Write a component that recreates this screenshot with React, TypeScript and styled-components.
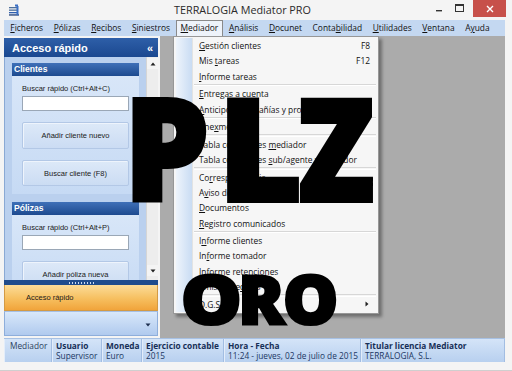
import React from "react";
import styled, { createGlobalStyle } from "styled-components";

const GlobalStyle = createGlobalStyle`
  html, body { margin: 0; padding: 0; }
  body { background: #f2f2f2; overflow: hidden; }
  * { box-sizing: border-box; }
`;

const UI = `"Open Sans", "Noto Sans", sans-serif`;
const TAHOMA = `"Liberation Sans", Arial, sans-serif`;

const Window = styled.div`
  position: relative;
  width: 512px;
  height: 371px;
  display: flex;
  flex-direction: column;
  background: #f4f4f4;
  padding: 0 7px 8px 4px;
  border-bottom: 1px solid #cfcfcf;
  font-family: ${UI};
  overflow: hidden;
`;

const TitleBar = styled.div`
  height: 20px;
  display: flex;
  align-items: flex-start;
  margin-right: -1px;
`;

const AppIcon = styled.svg`
  margin: 4px 0 0 4px;
  flex: none;
`;

const TitleText = styled.div`
  flex: 1;
  text-align: center;
  padding: 2px 0 0 32px;
  font-size: 10.8px;
  color: #2b2b2b;
  line-height: 16px;
`;

const Controls = styled.div`
  display: flex;
  align-items: flex-start;
`;

const CtrlBtn = styled.div<{ $w: number; $close?: boolean }>`
  width: ${(p) => p.$w}px;
  height: 17px;
  display: flex;
  align-items: center;
  justify-content: center;
  background: ${(p) => (p.$close ? "#c7504a" : "transparent")};
`;

const MenuBar = styled.div`
  height: 16px;
  display: flex;
  align-items: stretch;
  background: #c4d8f1;
  padding-left: 1px;
`;

const MenuItem = styled.div<{ $open?: boolean }>`
  padding: 0 ${(p) => (p.$open ? 3.3 : 5.3)}px;
  margin: 0 ${(p) => (p.$open ? 1 : 0)}px;
  font-size: 8.4px;
  line-height: ${(p) => (p.$open ? 14 : 16)}px;
  color: #111;
  background: ${(p) => (p.$open ? "#eef3fa" : "transparent")};
  border: ${(p) => (p.$open ? "1px solid #8a8a8a" : "none")};
  border-bottom: none;
  position: relative;
  z-index: 3;
`;

const Key = styled.span`
  text-decoration: underline;
  text-underline-offset: 1px;
  text-decoration-thickness: 1px;
`;

const Main = styled.div`
  flex: 1;
  display: flex;
  min-height: 0;
`;

const LeftPanel = styled.div`
  width: 154px;
  display: flex;
  flex-direction: column;
  padding-bottom: 2px;
`;

const PanelHeader = styled.div`
  height: 19px;
  margin-top: 2px;
  display: flex;
  align-items: center;
  justify-content: space-between;
  padding: 0 5px 0 8px;
  background: linear-gradient(#2e5fa8, #1b4890);
  color: #fff;
  font: bold 11px ${TAHOMA};
`;

const PanelBody = styled.div`
  height: 223px;
  display: flex;
  background: #bad0ee;
  border-left: 1px solid #8aa9d4;
  overflow: hidden;
`;

const PanelContent = styled.div`
  flex: 1;
  padding: 6px 7px 0 7px;
`;

const Section = styled.div`
  margin-bottom: 8px;
`;

const SectionHeader = styled.div`
  height: 13px;
  padding-left: 2px;
  background: linear-gradient(#3f70b8, #1d4a8f);
  color: #fff;
  font: bold 8.6px/13px ${TAHOMA};
`;

const SectionBody = styled.div`
  padding: 8px 10px 8px 10px;
  background: linear-gradient(#d8e6f8, #c6daf4);
  display: flex;
  flex-direction: column;
`;

const FieldLabel = styled.div`
  font: 7.5px/10px ${TAHOMA};
  color: #1a1a1a;
`;

const SearchInput = styled.div`
  margin-top: 2px;
  height: 15px;
  background: #fff;
  border: 1px solid #9aa7b6;
`;

const PanelButton = styled.div<{ $h: number }>`
  margin-top: 11px;
  height: ${(p) => p.$h}px;
  display: flex;
  align-items: center;
  justify-content: center;
  background: linear-gradient(#dde9f8, #cbdcf3);
  border: 1px solid #b3c8e6;
  border-radius: 2px;
  box-shadow: inset 1px 1px 0 #eef4fc;
  font: 7.5px ${TAHOMA};
  color: #1a1a1a;
  flex: none;
`;

const Scrollbar = styled.div`
  width: 12px;
  display: flex;
  flex-direction: column;
  justify-content: space-between;
  background: #ededed;
  border-left: 1px solid #d5d5d5;
  padding: 1px 0 4px;
`;

const ScrollArrow = styled.div`
  height: 11px;
  display: flex;
  align-items: center;
  justify-content: center;
  background: #f4f4f4;
`;

const Splitter = styled.div`
  height: 5px;
  display: flex;
  align-items: center;
  justify-content: center;
  background: #1f4c8d;
`;

const Grip = styled.div`
  width: 26px;
  height: 2px;
  background-image: radial-gradient(circle, #c9daf2 0.6px, transparent 0.8px);
  background-size: 3px 2px;
`;

const OrangeBar = styled.div`
  height: 26px;
  display: flex;
  align-items: center;
  padding-left: 21px;
  background: linear-gradient(#fcdc98, #f6bf5f 55%, #f1a43b);
  border: 1px solid #d39a44;
  border-top: none;
  font: 7.5px ${TAHOMA};
  color: #1a1a1a;
`;

const BlueBar = styled.div`
  height: 25px;
  display: flex;
  align-items: flex-end;
  justify-content: flex-end;
  padding: 0 6px 7px 0;
  background: linear-gradient(#d9e8fa, #b0caee);
  border: 1px solid #8eaedb;
  border-top: 1px solid #a6c0e5;
`;

const Mdi = styled.div`
  flex: 1;
  margin-left: 2px;
  background: #ababab;
`;

const StatusBar = styled.div`
  height: 24px;
  display: flex;
  background: linear-gradient(#d4e4f8, #b8d0ef);
  border-top: 1px solid #a7c1e4;
  position: relative;
`;

const Cell = styled.div<{ $w?: number; $pad?: number }>`
  ${(p) => (p.$w ? `width: ${p.$w}px; flex: none;` : "flex: 1;")}
  padding: 2px 0 0 ${(p) => p.$pad ?? 4}px;
  border-right: 1px solid #a2bde2;
  box-shadow: inset 1px 0 0 #e3edfa;
  font-size: 8.3px;
  line-height: 10px;
  color: #1b3662;
  white-space: nowrap;
  overflow: hidden;
`;

const CellTitle = styled.div<{ $bold?: boolean }>`
  font-weight: ${(p) => (p.$bold ? 700 : 400)};
  color: ${(p) => (p.$bold ? "#172f57" : "#2c3f5c")};
`;

const Dropdown = styled.div`
  position: absolute;
  left: 173px;
  top: 36px;
  width: 206px;
  padding: 1px 2px;
  background: #f6f6f6;
  border: 1px solid #979797;
  box-shadow: 3px 3px 3px rgba(0, 0, 0, 0.35);
  z-index: 2;
  display: flex;
  flex-direction: column;
  &::before {
    content: "";
    position: absolute;
    left: 2px;
    top: 1px;
    bottom: 1px;
    width: 16px;
    background: linear-gradient(90deg, #eef4fb, #c9dcf3);
    border-right: 1px solid #e2e3e3;
  }
`;

const DropItem = styled.div`
  position: relative;
  height: 15.3px;
  display: flex;
  align-items: center;
  justify-content: space-between;
  padding: 0 6px 0 23px;
  font-size: 8.4px;
  color: #111;
  white-space: nowrap;
`;

const DropSep = styled.div`
  position: relative;
  height: 2.3px;
  margin-left: 18px;
  border-top: 1px solid #d7d7d7;
  border-bottom: 1px solid #fff;
`;

const Stamp = styled.div<{ $size: number; $left: number; $top: number; $stroke: number }>`
  position: absolute;
  left: ${(p) => p.$left}px;
  top: ${(p) => p.$top}px;
  font-family: "Open Sans", "DejaVu Sans", sans-serif;
  font-weight: 800;
  font-size: ${(p) => p.$size}px;
  line-height: 1;
  color: #000;
  -webkit-text-stroke: ${(p) => p.$stroke}px #000;
  z-index: 5;
  white-space: nowrap;
  pointer-events: none;
`;

const StampLetter = styled.span<{ $after?: number; $sx?: number }>`
  display: inline-block;
  margin-right: ${(p) => p.$after ?? 0}px;
  transform: scaleX(${(p) => p.$sx ?? 1});
  transform-origin: left center;
`;

function Label({ text }: { text: string }) {
  const i = text.indexOf("&");
  if (i < 0) return <>{text}</>;
  return (
    <>
      {text.slice(0, i)}
      <Key>{text[i + 1]}</Key>
      {text.slice(i + 2)}
    </>
  );
}

const menus = [
  "&Ficheros",
  "&Pólizas",
  "&Recibos",
  "&Siniestros",
  "&Mediador",
  "&Análisis",
  "&Docunet",
  "Conta&bilidad",
  "&Utilidades",
  "&Ventana",
  "A&yuda",
];

type Entry = { label: string; shortcut?: string; sub?: boolean } | "sep";

const mediadorMenu: Entry[] = [
  { label: "&Gestión clientes", shortcut: "F8" },
  { label: "Mis &tareas", shortcut: "F12" },
  { label: "&Informe tareas" },
  "sep",
  { label: "&Entregas a cuenta" },
  { label: "&Anticipos compañías y productores" },
  "sep",
  { label: "Ane&xmed" },
  "sep",
  { label: "Tabla comisiones &mediador" },
  { label: "Tabla comisiones &sub/agente y cobrador" },
  "sep",
  { label: "Co&rrespondencia" },
  { label: "A&viso de vencimientos" },
  { label: "&Documentos" },
  { label: "&Registro comunicados" },
  "sep",
  { label: "I&nforme clientes" },
  { label: "In&forme tomador" },
  { label: "Inf&orme retenciones" },
  { label: "Emisión re&cibos" },
  "sep",
  { label: "D.G.S.F.&P.", sub: true },
];

const Arrow = ({ dir, color = "#222" }: { dir: "up" | "down" | "right"; color?: string }) => (
  <svg width="6" height="6" viewBox="0 0 6 6">
    {dir === "up" && <path d="M0.5 4.5 L3 1.5 L5.5 4.5 Z" fill={color} />}
    {dir === "down" && <path d="M0.5 1.5 L3 4.5 L5.5 1.5 Z" fill={color} />}
    {dir === "right" && <path d="M1.5 0.5 L4.5 3 L1.5 5.5 Z" fill={color} />}
  </svg>
);

function ClientesSection() {
  return (
    <Section>
      <SectionHeader>Clientes</SectionHeader>
      <SectionBody>
        <FieldLabel>Buscar rápido (Ctrl+Alt+C)</FieldLabel>
        <SearchInput />
        <PanelButton $h={27}>Añadir cliente nuevo</PanelButton>
        <PanelButton $h={26}>Buscar cliente (F8)</PanelButton>
      </SectionBody>
    </Section>
  );
}

function PolizasSection() {
  return (
    <Section>
      <SectionHeader>Pólizas</SectionHeader>
      <SectionBody>
        <FieldLabel>Buscar rápido (Ctrl+Alt+P)</FieldLabel>
        <SearchInput />
        <PanelButton $h={27}>Añadir póliza nueva</PanelButton>
      </SectionBody>
    </Section>
  );
}

export default function App() {
  return (
    <>
      <GlobalStyle />
      <Window>
        <TitleBar>
          <AppIcon width="12" height="12" viewBox="0 0 12 12">
            <rect x="7" y="0.5" width="3" height="2" fill="#3a6fc4" />
            <rect x="1" y="3" width="9" height="1.3" fill="#4d6f9c" />
            <rect x="1" y="5.5" width="9" height="1.3" fill="#4d6f9c" />
            <rect x="1" y="8" width="9" height="1.3" fill="#2f5fae" />
            <rect x="1" y="10.3" width="10" height="1.3" fill="#1f3f7a" />
            <rect x="8.5" y="2" width="2" height="9" fill="#3a6fc4" />
          </AppIcon>
          <TitleText>TERRALOGIA Mediator PRO</TitleText>
          <Controls>
            <CtrlBtn $w={12}>
              <svg width="6" height="8" viewBox="0 0 6 8">
                <rect x="0" y="5" width="6" height="1.4" fill="#333" />
              </svg>
            </CtrlBtn>
            <CtrlBtn $w={28}>
              <svg width="9" height="9" viewBox="0 0 9 9">
                <rect x="0.5" y="0.5" width="8" height="7" fill="none" stroke="#333" />
                <rect x="0.5" y="0.5" width="8" height="1.5" fill="#333" />
              </svg>
            </CtrlBtn>
            <CtrlBtn $w={33} $close>
              <svg width="8" height="8" viewBox="0 0 8 8">
                <path d="M1 1 L7 7 M7 1 L1 7" stroke="#fff" strokeWidth="1.4" />
              </svg>
            </CtrlBtn>
          </Controls>
        </TitleBar>

        <MenuBar>
          {menus.map((m) => (
            <MenuItem key={m} $open={m === "&Mediador"}>
              <Label text={m} />
            </MenuItem>
          ))}
        </MenuBar>

        <Main>
          <LeftPanel>
            <PanelHeader>
              <span>Acceso rápido</span>
              <span>«</span>
            </PanelHeader>
            <PanelBody>
              <PanelContent>
                <ClientesSection />
                <PolizasSection />
              </PanelContent>
              <Scrollbar>
                <ScrollArrow>
                  <Arrow dir="up" />
                </ScrollArrow>
                <ScrollArrow>
                  <Arrow dir="down" />
                </ScrollArrow>
              </Scrollbar>
            </PanelBody>
            <Splitter>
              <Grip />
            </Splitter>
            <OrangeBar>Acceso rápido</OrangeBar>
            <BlueBar>
              <Arrow dir="down" color="#1d2f4f" />
            </BlueBar>
          </LeftPanel>
          <Mdi />
        </Main>

        <StatusBar>
          <Cell $w={48} $pad={6}>
            <CellTitle>Mediador</CellTitle>
          </Cell>
          <Cell $w={50}>
            <CellTitle $bold>Usuario</CellTitle>
            <div>Supervisor</div>
          </Cell>
          <Cell $w={40}>
            <CellTitle $bold>Moneda</CellTitle>
            <div>Euro</div>
          </Cell>
          <Cell $w={82}>
            <CellTitle $bold>Ejercicio contable</CellTitle>
            <div>2015</div>
          </Cell>
          <Cell $w={137}>
            <CellTitle $bold>Hora - Fecha</CellTitle>
            <div>11:24 - jueves, 02 de julio de 2015</div>
          </Cell>
          <Cell>
            <CellTitle $bold>Titular licencia Mediator</CellTitle>
            <div>TERRALOGIA, S.L.</div>
          </Cell>
        </StatusBar>

        <Dropdown>
          {mediadorMenu.map((e, i) =>
            e === "sep" ? (
              <DropSep key={i} />
            ) : (
              <DropItem key={i}>
                <span>
                  <Label text={e.label} />
                </span>
                {e.shortcut && <span>{e.shortcut}</span>}
                {e.sub && <Arrow dir="right" />}
              </DropItem>
            )
          )}
        </Dropdown>

        <Stamp $size={142} $left={124} $top={75} $stroke={4}>
          <StampLetter $sx={0.95} $after={4}>P</StampLetter>
          <StampLetter $sx={1.02} $after={-2}>L</StampLetter>
          <StampLetter $sx={0.88}>Z</StampLetter>
        </Stamp>
        <Stamp $size={68} $left={181} $top={264} $stroke={3}>
          <StampLetter $sx={1.12} $after={3}>O</StampLetter>
          <StampLetter $after={-1}>R</StampLetter>
          <StampLetter $sx={1.02}>O</StampLetter>
        </Stamp>
      </Window>
    </>
  );
}
